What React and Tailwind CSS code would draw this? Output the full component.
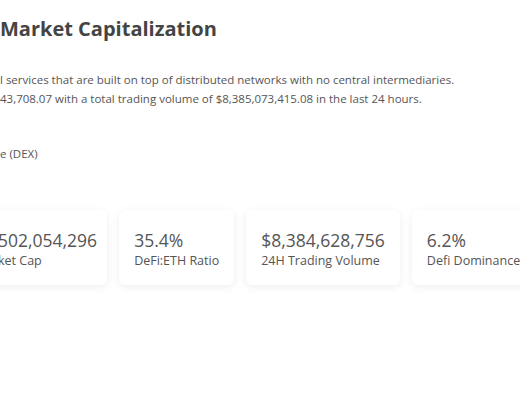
export default function App() {
  const cards = [
    { v: "502,054,296", l: "ket Cap", first: true },
    { v: "35.4%", l: "DeFi:ETH Ratio" },
    { v: "$8,384,628,756", l: "24H Trading Volume" },
    { v: "6.2%", l: "Defi Dominance" },
  ];
  return (
    <div className="w-[520px] h-[400px] overflow-hidden bg-white text-[#555] font-['Open_Sans',sans-serif]">
      <h1 className="pt-[15px] text-[20px] leading-[28px] font-bold text-[#444] whitespace-nowrap">
        Market Capitalization
      </h1>
      <div className="mt-[27px] text-[11.5px] leading-[19px] whitespace-nowrap">
        <div>l services that are built on top of distributed networks with no central intermediaries.</div>
        <div>43,708.07 with a total trading volume of $8,385,073,415.08 in the last 24 hours.</div>
      </div>
      <div className="mt-[36px] text-[11.5px] leading-[19px] whitespace-nowrap">e (DEX)</div>
      <div className="mt-[47px] flex gap-[12px] -ml-[18px] pb-6">
        {cards.map((c, i) => (
          <div
            key={i}
            className={
              c.first
                ? "shrink-0 rounded-[6px] bg-white pl-[16px] pr-[10px] pt-[19px] pb-[15px] shadow-[0_2px_8px_rgba(0,0,0,0.07)] whitespace-nowrap"
                : "shrink-0 rounded-[6px] bg-white px-[15px] pt-[19px] pb-[15px] shadow-[0_2px_8px_rgba(0,0,0,0.07)] whitespace-nowrap"
            }
          >
            <div className="text-[17.5px] leading-[22px] text-[#555]">{c.v}</div>
            <div className="text-[12.5px] leading-[19px] text-[#555]">{c.l}</div>
          </div>
        ))}
      </div>
    </div>
  );
}
